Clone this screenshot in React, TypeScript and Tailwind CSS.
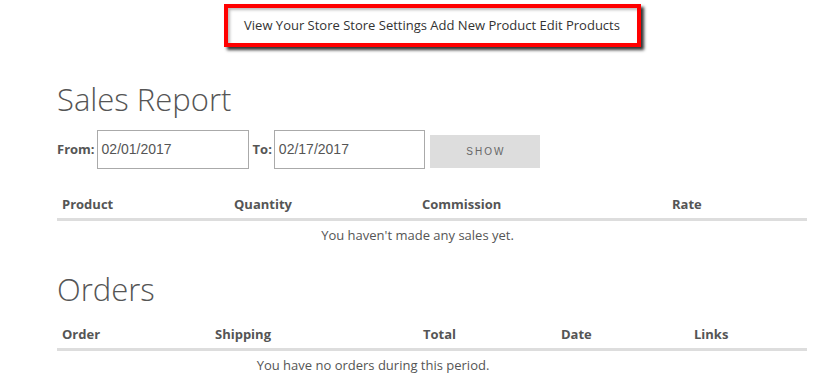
const SALES_COLS = [
  { label: 'Product', w: 'w-[172px]' },
  { label: 'Quantity', w: 'w-[188px]' },
  { label: 'Commission', w: 'w-[250px]' },
  { label: 'Rate', w: 'w-[140px]' },
];

const ORDER_COLS = [
  { label: 'Order', w: 'w-[153px]' },
  { label: 'Shipping', w: 'w-[208px]' },
  { label: 'Total', w: 'w-[138px]' },
  { label: 'Date', w: 'w-[133px]' },
  { label: 'Links', w: 'w-[118px]' },
];

function Table({ cols, empty, emptyW }: { cols: { label: string; w: string }[]; empty: string; emptyW: string }) {
  return (
    <div className="w-[750px]">
      <div className="flex border-b-[3px] border-[#dddddd] pb-[4px]">
        {cols.map(c => (
          <div key={c.label} className={`${c.w} px-[5px] text-[13px] font-bold text-[#555555] leading-[20px]`}>{c.label}</div>
        ))}
      </div>
      <p className={`${emptyW} text-center text-[13px] text-[#555555] leading-[20px] pt-[4px]`}>{empty}</p>
    </div>
  );
}

export default function App() {
  return (
    <div className="min-h-[391px] bg-white font-['Open_Sans',sans-serif] pl-[57px]">
      <div className="w-[750px]">
        <div className="flex justify-center pt-[4px]">
          <div className="w-[417px] h-[43px] border-[4px] border-[#ff0000] shadow-[3px_3px_3px_#333333,inset_2px_2px_3px_#bbbbbb] flex items-center justify-center">
            <span className="text-[13px] text-[#333333]">View Your Store Store Settings Add New Product Edit Products</span>
          </div>
        </div>

        <h1 className="mt-[32px] text-[31px] font-light text-[#555555] leading-[40px]">Sales Report</h1>

        <div className="mt-[11px] flex items-start">
          <span className="self-center text-[13px] font-bold text-[#555555]">From:</span>
          <div className="ml-[2px] w-[152px] h-[39px] border border-[#aaaaaa] flex items-center px-[4px] text-[14px] text-[#555555] font-['Liberation_Sans',Arial,sans-serif]">02/01/2017</div>
          <span className="self-center ml-[4px] text-[13px] font-bold text-[#555555]">To:</span>
          <div className="ml-[2px] w-[151px] h-[39px] border border-[#aaaaaa] flex items-center px-[4px] text-[14px] text-[#555555] font-['Liberation_Sans',Arial,sans-serif]">02/17/2017</div>
          <div className="ml-[5px] mt-[5px] w-[110px] h-[33px] bg-[#dddddd] flex items-center justify-center pl-[2px] text-[10px] tracking-[2px] text-[#666666] font-['Liberation_Sans',Arial,sans-serif]">SHOW</div>
        </div>

        <div className="mt-[25px]">
          <Table cols={SALES_COLS} empty="You haven't made any sales yet." emptyW="w-[721px]" />
        </div>

        <h2 className="mt-[24px] text-[31px] font-light text-[#555555] leading-[40px]">Orders</h2>

        <div className="mt-[15px]">
          <Table cols={ORDER_COLS} empty="You have no orders during this period." emptyW="w-[632px]" />
        </div>
      </div>
    </div>
  );
}
